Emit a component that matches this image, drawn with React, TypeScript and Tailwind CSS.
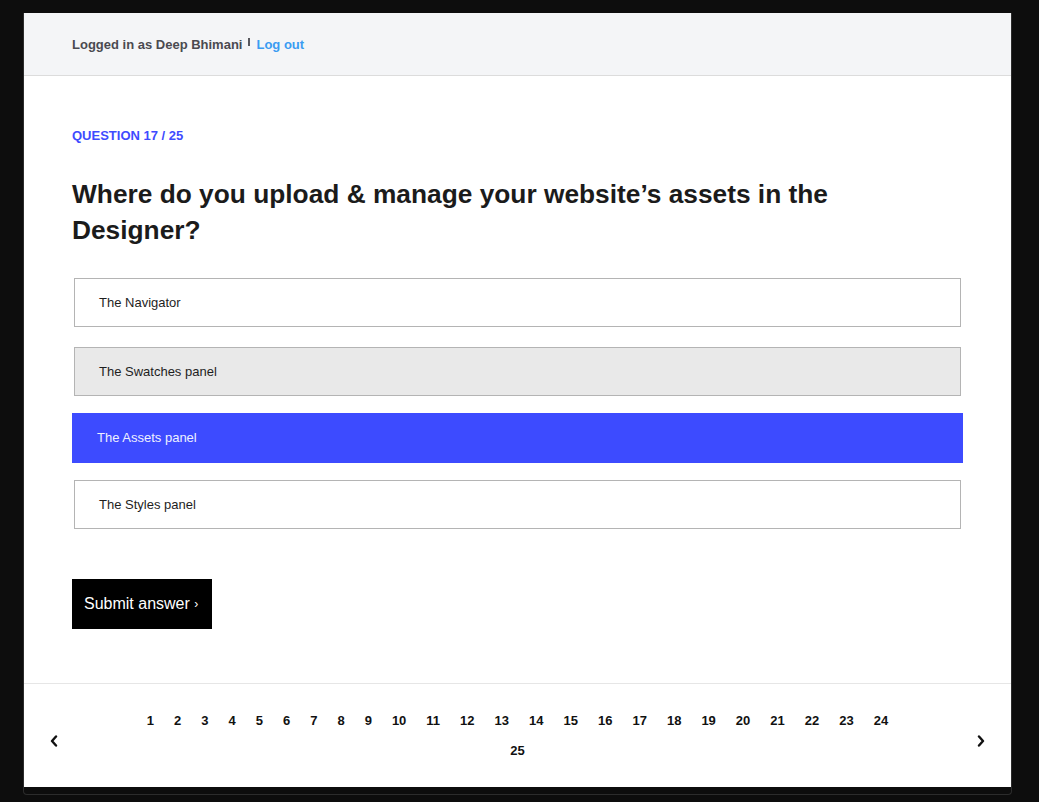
import { useState } from "react";

const options = ["The Navigator", "The Swatches panel", "The Assets panel", "The Styles panel"];
const pages = Array.from({ length: 25 }, (_, i) => i + 1);

function Chevron({ dir }: { dir: "left" | "right" }) {
  return (
    <svg width="8" height="12" viewBox="0 0 8 12" aria-hidden>
      <polyline
        points={dir === "left" ? "6,1.5 2,6 6,10.5" : "2,1.5 6,6 2,10.5"}
        fill="none"
        stroke="#111"
        strokeWidth="2.4"
        strokeLinecap="round"
        strokeLinejoin="round"
      />
    </svg>
  );
}

export default function App() {
  const [selected, setSelected] = useState(2);
  const hovered = 1;

  return (
    <div className="min-h-screen bg-[#0d0d0d] pt-[13px] font-['Liberation_Sans',Arial,sans-serif]">
      <div className="ml-[23px] w-[989px] border-x border-b border-[#2c2c2c] rounded-b-[4px] pb-[7px]">
        <div className="bg-white">
          {/* Header */}
          <header className="h-[63px] bg-[#f4f5f7] border-b border-[#dcdcdc] px-[48px] flex items-center pt-[1px]">
            <span className="text-[13px] font-bold text-[#4a4a50]">Logged in as Deep Bhimani</span>
            <span className="ml-[6px] mb-[5px] w-[2px] h-[8px] bg-[#58585e]" />
            <a className="ml-[6px] text-[13px] font-bold text-[#3b9cf2]" href="#">
              Log out
            </a>
          </header>

          {/* Question */}
          <main className="px-[48px] pt-[52px] pb-[54px]">
            <p className="text-[13px] leading-[16px] font-bold text-[#3e4bff]">QUESTION 17 / 25</p>
            <h1 className="mt-[32px] text-[26.3px] leading-[36px] font-bold text-[#1b1b1b] pr-[110px]">
              Where do you upload &amp; manage your website’s assets in the Designer?
            </h1>

            <div className="mt-[28px] flex flex-col gap-[15px]">
              {options.map((o, i) =>
                i === selected ? (
                  <button
                    key={o}
                    className="h-[50px] bg-[#3d4bff] text-left pl-[25px] text-[13px] text-[#eef0ff]"
                  >
                    {o}
                  </button>
                ) : (
                  <button
                    key={o}
                    onClick={() => setSelected(i)}
                    className={`m-[2px] h-[49px] border border-[#b4b4b4] text-left pl-[24px] text-[13px] text-[#1e1e1e] ${
                      i === hovered ? "bg-[#e9e9e9]" : "bg-white"
                    } ${i === 0 ? "mb-[3px]" : ""}`}
                  >
                    {o}
                  </button>
                )
              )}
            </div>

            <button className="mt-[48px] h-[50px] w-[140px] bg-black text-white text-[16px] text-left pl-[12px]">
              Submit answer <span className="text-[12px] relative -top-[1px]">›</span>
            </button>
          </main>

          {/* Pagination */}
          <footer className="h-[104px] border-t border-[#e6e6e6] flex items-center px-[24px]">
            <button className="w-[10px] ml-[1px] mt-[10px] flex justify-center">
              <Chevron dir="left" />
            </button>
            <div className="flex-1 flex justify-center">
              <ul className="w-[780px] flex flex-wrap justify-center">
                {pages.map((p) => (
                  <li key={p} className="px-[10px] text-[13px] leading-[30px] font-bold text-[#111]">
                    {p}
                  </li>
                ))}
              </ul>
            </div>
            <button className="w-[10px] mr-[1px] mt-[10px] flex justify-center">
              <Chevron dir="right" />
            </button>
          </footer>
        </div>
      </div>
    </div>
  );
}
